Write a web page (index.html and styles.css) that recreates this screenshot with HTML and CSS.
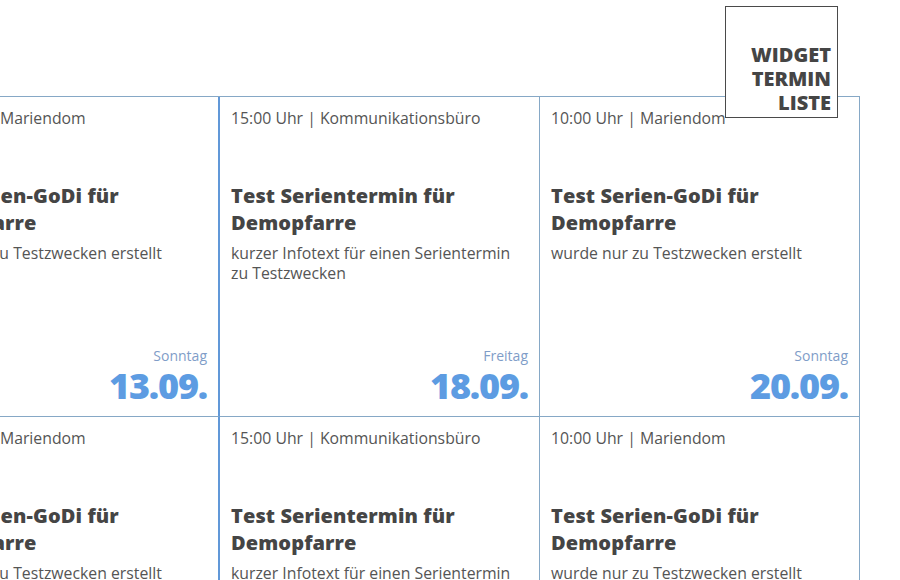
FILE: index.html
```html
<!DOCTYPE html>
<html lang="de">
<head>
<meta charset="utf-8">
<title>Widget Termin Liste</title>
<link rel="stylesheet" href="styles.css">
</head>
<body>
<div class="page">
  <div class="widget-label">WIDGET<br>TERMIN<br>LISTE</div>
  <div class="grid">
    <div class="card first">
      <div class="meta">10:00 Uhr | Mariendom</div>
      <h3 class="title">Test Serien-GoDi für Demopfarre</h3>
      <p class="desc">wurde nur zu Testzwecken erstellt</p>
      <div class="when"><span class="day">Sonntag</span><span class="date">13.09.</span></div>
    </div>
    <div class="card">
      <div class="meta">15:00 Uhr | Kommunikationsbüro</div>
      <h3 class="title">Test Serientermin für Demopfarre</h3>
      <p class="desc">kurzer Infotext für einen Serientermin zu Testzwecken</p>
      <div class="when"><span class="day">Freitag</span><span class="date">18.09.</span></div>
    </div>
    <div class="card">
      <div class="meta">10:00 Uhr | Mariendom</div>
      <h3 class="title">Test Serien-GoDi für Demopfarre</h3>
      <p class="desc">wurde nur zu Testzwecken erstellt</p>
      <div class="when"><span class="day">Sonntag</span><span class="date">20.09.</span></div>
    </div>
    <div class="card first">
      <div class="meta">10:00 Uhr | Mariendom</div>
      <h3 class="title">Test Serien-GoDi für Demopfarre</h3>
      <p class="desc">wurde nur zu Testzwecken erstellt</p>
      <div class="when"><span class="day">Sonntag</span><span class="date">20.09.</span></div>
    </div>
    <div class="card">
      <div class="meta">15:00 Uhr | Kommunikationsbüro</div>
      <h3 class="title">Test Serientermin für Demopfarre</h3>
      <p class="desc">kurzer Infotext für einen Serientermin zu Testzwecken</p>
      <div class="when"><span class="day">Freitag</span><span class="date">25.09.</span></div>
    </div>
    <div class="card">
      <div class="meta">10:00 Uhr | Mariendom</div>
      <h3 class="title">Test Serien-GoDi für Demopfarre</h3>
      <p class="desc">wurde nur zu Testzwecken erstellt</p>
      <div class="when"><span class="day">Sonntag</span><span class="date">27.09.</span></div>
    </div>
  </div>
</div>
</body>
</html>
```

FILE: styles.css
```css
* { box-sizing: border-box; }
html, body {
  margin: 0;
  padding: 0;
  background: #fff;
  overflow: hidden;
}
body {
  font-family: "Open Sans", "Liberation Sans", sans-serif;
  color: #555;
  width: 900px;
  height: 580px;
}
.page {
  position: relative;
  padding-top: 96px;
}
.widget-label {
  position: absolute;
  left: 725px;
  top: 6px;
  width: 113px;
  height: 112px;
  border: 1px solid #4a4a4a;
  background: #fff;
  z-index: 2;
  display: flex;
  flex-direction: column;
  justify-content: flex-end;
  text-align: right;
  padding: 0 6px 2px 0;
  font-weight: 800;
  font-size: 20px;
  line-height: 24px;
  color: #454545;
}
.grid {
  display: grid;
  grid-template-columns: 320px 320px 320px;
  margin-left: -100px;
  width: 960px;
  border-top: 1px solid #86a8c6;
}
.card {
  height: 320px;
  display: flex;
  flex-direction: column;
  padding: 11px 11px 10px 11px;
  border-right: 1px solid #86a8c6;
  border-bottom: 1px solid #86a8c6;
}
.card.first {
  border-right: 2px solid #6198d8;
}
.meta {
  font-size: 15.8px;
  line-height: 20px;
  color: #555;
}
.title {
  margin: 54px 0 0 0;
  font-size: 20px;
  line-height: 27px;
  font-weight: 800;
  letter-spacing: 0.1px;
  color: #454545;
}
.desc {
  margin: 7px 0 0 0;
  font-size: 15.8px;
  line-height: 20px;
  color: #555;
}
.when {
  margin-top: auto;
  display: flex;
  flex-direction: column;
  align-items: flex-end;
}
.day {
  font-size: 14px;
  line-height: 20px;
  color: #7f9dc8;
}
.date {
  font-size: 36px;
  line-height: 40px;
  font-weight: 800;
  letter-spacing: -1.2px;
  color: #5d9ce2;
}
```
